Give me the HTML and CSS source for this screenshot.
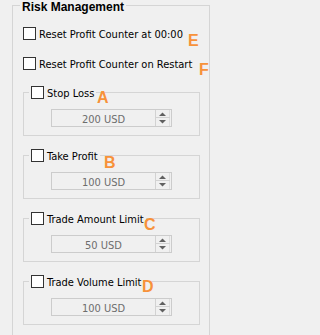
FILE: index.html
```html
<!DOCTYPE html>
<html>
<head>
<meta charset="utf-8">
<link rel="stylesheet" href="styles.css">
</head>
<body>
<div class="panel">
  <div class="panel-title">Risk Management</div>

  <div class="row row-1">
    <span class="cb"></span><span class="lbl">Reset Profit Counter at 00:00</span>
    <span class="mark mark-e">E</span>
  </div>
  <div class="row row-2">
    <span class="cb"></span><span class="lbl">Reset Profit Counter on Restart</span>
    <span class="mark mark-f">F</span>
  </div>

  <div class="group group-first">
    <div class="head"><span class="cb"></span><span class="lbl">Stop Loss</span></div>
    <div class="spin"><span class="val">200 USD</span><svg class="arrows" viewBox="0 0 16 16" width="16" height="16" shape-rendering="crispEdges"><line x1="0.5" y1="0" x2="0.5" y2="16" stroke="#D2D2D2"/><line x1="14.5" y1="0" x2="14.5" y2="16" stroke="#DEDEDE"/><line x1="1" y1="7.5" x2="15" y2="7.5" stroke="#D2D2D2"/><polygon points="4,6 11,6 7.5,2.5" fill="#606060" shape-rendering="auto"/><polygon points="4,10 11,10 7.5,13.5" fill="#606060" shape-rendering="auto"/></svg></div>
    <span class="mark mark-a">A</span>
  </div>

  <div class="group">
    <div class="head"><span class="cb"></span><span class="lbl">Take Profit</span></div>
    <div class="spin"><span class="val">100 USD</span><svg class="arrows" viewBox="0 0 16 16" width="16" height="16" shape-rendering="crispEdges"><line x1="0.5" y1="0" x2="0.5" y2="16" stroke="#D2D2D2"/><line x1="14.5" y1="0" x2="14.5" y2="16" stroke="#DEDEDE"/><line x1="1" y1="7.5" x2="15" y2="7.5" stroke="#D2D2D2"/><polygon points="4,6 11,6 7.5,2.5" fill="#606060" shape-rendering="auto"/><polygon points="4,10 11,10 7.5,13.5" fill="#606060" shape-rendering="auto"/></svg></div>
    <span class="mark mark-b">B</span>
  </div>

  <div class="group">
    <div class="head"><span class="cb"></span><span class="lbl">Trade Amount Limit</span></div>
    <div class="spin"><span class="val">50 USD</span><svg class="arrows" viewBox="0 0 16 16" width="16" height="16" shape-rendering="crispEdges"><line x1="0.5" y1="0" x2="0.5" y2="16" stroke="#D2D2D2"/><line x1="14.5" y1="0" x2="14.5" y2="16" stroke="#DEDEDE"/><line x1="1" y1="7.5" x2="15" y2="7.5" stroke="#D2D2D2"/><polygon points="4,6 11,6 7.5,2.5" fill="#606060" shape-rendering="auto"/><polygon points="4,10 11,10 7.5,13.5" fill="#606060" shape-rendering="auto"/></svg></div>
    <span class="mark mark-c">C</span>
  </div>

  <div class="group">
    <div class="head"><span class="cb"></span><span class="lbl">Trade Volume Limit</span></div>
    <div class="spin"><span class="val">100 USD</span><svg class="arrows" viewBox="0 0 16 16" width="16" height="16" shape-rendering="crispEdges"><line x1="0.5" y1="0" x2="0.5" y2="16" stroke="#D2D2D2"/><line x1="14.5" y1="0" x2="14.5" y2="16" stroke="#DEDEDE"/><line x1="1" y1="7.5" x2="15" y2="7.5" stroke="#D2D2D2"/><polygon points="4,6 11,6 7.5,2.5" fill="#606060" shape-rendering="auto"/><polygon points="4,10 11,10 7.5,13.5" fill="#606060" shape-rendering="auto"/></svg></div>
    <span class="mark mark-d">D</span>
  </div>
</div>
</body>
</html>
```

FILE: styles.css
```css
html, body {
  margin: 0;
  background: #F0F0F0;
}
body {
  height: 335px;
  overflow: hidden;
  font-family: "DejaVu Sans Condensed", "DejaVu Sans", sans-serif;
  font-stretch: condensed;
  font-size: 11px;
  color: #000;
}
.panel {
  box-sizing: border-box;
  width: 198px;
  height: 330px;
  margin: 5px 0 0 12px;
  border: 1px solid #D5D5D5;
  border-bottom: none;
}
.panel-title {
  width: fit-content;
  margin: -6px 0 0 7px;
  padding: 0 2px;
  background: #F0F0F0;
  font-family: "Liberation Sans", Arial, sans-serif;
  font-stretch: normal;
  font-weight: bold;
  font-size: 12px;
  line-height: 14px;
}
.row {
  position: relative;
  display: flex;
  align-items: flex-start;
  height: 13px;
  margin-left: 10px;
}
.row-1 { margin-top: 13px; }
.row-2 { margin-top: 17px; }
.cb {
  flex: none;
  box-sizing: border-box;
  width: 13px;
  height: 13px;
  border: 1px solid #333333;
  background: #FFFFFF;
}
.lbl {
  margin: 1px 0 0 3px;
  line-height: 13px;
  white-space: nowrap;
}
.group {
  position: relative;
  box-sizing: border-box;
  width: 177px;
  height: 44px;
  margin: 19px 0 0 10px;
  border: 1px solid #D5D5D5;
}
.group-first { margin-top: 22px; }
.head {
  display: flex;
  align-items: flex-start;
  width: fit-content;
  height: 13px;
  margin: -7px 0 0 5px;
  padding: 0 2px;
  background: #F0F0F0;
}
.spin {
  display: flex;
  box-sizing: border-box;
  width: 121px;
  height: 18px;
  margin: 10px 0 0 27px;
  border: 1px solid #CCCCCC;
}
.val {
  flex: 1;
  padding-top: 3px;
  line-height: 13px;
  text-align: center;
  color: #6D6D6D;
}
.arrows {
  display: block;
  flex: none;
}
.mark {
  position: absolute;
  font-family: "Liberation Sans", Arial, sans-serif;
  font-stretch: normal;
  font-weight: bold;
  font-size: 16px;
  line-height: 16px;
  color: #F7923A;
}
.mark-e { left: 165px; top: 6px; }
.mark-f { left: 176px; top: 5px; }
.mark-a { left: 73px; top: -3px; }
.mark-b { left: 80px; top: -1px; }
.mark-c { left: 120px; top: -2px; }
.mark-d { left: 118px; top: -3px; }
```
